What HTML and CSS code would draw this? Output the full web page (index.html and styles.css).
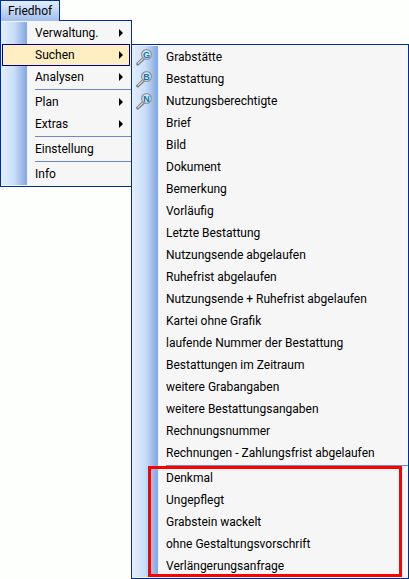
FILE: index.html
```html
<!DOCTYPE html>
<html lang="de">
<head>
    <meta charset="UTF-8">
    <meta name="viewport" content="width=device-width, initial-scale=1.0">
    <title>Friedhof</title>
    <link rel="stylesheet" href="styles.css">
</head>
<body>
    <nav class="menubar">
        <div class="main">
            <button type="button" class="tab">Friedhof</button>
            <ul class="menu main-menu">
                <li><button type="button" class="item">Verwaltung.<span class="arrow"></span></button></li>
                <li><button type="button" class="item active">Suchen<span class="arrow"></span></button></li>
                <li><button type="button" class="item">Analysen<span class="arrow"></span></button></li>
                <li class="separator"></li>
                <li><button type="button" class="item">Plan<span class="arrow"></span></button></li>
                <li><button type="button" class="item">Extras<span class="arrow"></span></button></li>
                <li class="separator"></li>
                <li><button type="button" class="item">Einstellung</button></li>
                <li class="separator"></li>
                <li><button type="button" class="item">Info</button></li>
            </ul>
        </div>

        <div class="menu submenu">
            <ul>
                <li><button type="button" class="item">
                    <svg class="icon" width="18" height="18" viewBox="0 0 18 18">
                        <path d="M1.8 15.8 L7.5 10.5" stroke="#77777b" stroke-width="3.2" stroke-linecap="round"/>
                        <path d="M2 15.4 L8 9.8" stroke="#d8d4cf" stroke-width="1.3" stroke-linecap="round"/>
                        <circle cx="10.5" cy="6.5" r="4.9" fill="#c9eaf8" stroke="#8f9299" stroke-width="1.2"/>
                        <text class="letter" x="10.5" y="9.5">G</text>
                    </svg>Grabstätte</button></li>
                <li><button type="button" class="item">
                    <svg class="icon" width="18" height="18" viewBox="0 0 18 18">
                        <path d="M1.8 15.8 L7.5 10.5" stroke="#77777b" stroke-width="3.2" stroke-linecap="round"/>
                        <path d="M2 15.4 L8 9.8" stroke="#d8d4cf" stroke-width="1.3" stroke-linecap="round"/>
                        <circle cx="10.5" cy="6.5" r="4.9" fill="#c9eaf8" stroke="#8f9299" stroke-width="1.2"/>
                        <text class="letter" x="10.5" y="9.5">B</text>
                    </svg>Bestattung</button></li>
                <li><button type="button" class="item">
                    <svg class="icon" width="18" height="18" viewBox="0 0 18 18">
                        <path d="M1.8 15.8 L7.5 10.5" stroke="#77777b" stroke-width="3.2" stroke-linecap="round"/>
                        <path d="M2 15.4 L8 9.8" stroke="#d8d4cf" stroke-width="1.3" stroke-linecap="round"/>
                        <circle cx="10.5" cy="6.5" r="4.9" fill="#c9eaf8" stroke="#8f9299" stroke-width="1.2"/>
                        <text class="letter" x="10.5" y="9.5">N</text>
                    </svg>Nutzungsberechtigte</button></li>
                <li><button type="button" class="item">Brief</button></li>
                <li><button type="button" class="item">Bild</button></li>
                <li><button type="button" class="item">Dokument</button></li>
                <li><button type="button" class="item">Bemerkung</button></li>
                <li><button type="button" class="item">Vorläufig</button></li>
                <li><button type="button" class="item">Letzte Bestattung</button></li>
                <li><button type="button" class="item">Nutzungsende abgelaufen</button></li>
                <li><button type="button" class="item">Ruhefrist abgelaufen</button></li>
                <li><button type="button" class="item">Nutzungsende + Ruhefrist abgelaufen</button></li>
                <li><button type="button" class="item">Kartei ohne Grafik</button></li>
                <li><button type="button" class="item">laufende Nummer der Bestattung</button></li>
                <li><button type="button" class="item">Bestattungen im Zeitraum</button></li>
                <li><button type="button" class="item">weitere Grabangaben</button></li>
                <li><button type="button" class="item">weitere Bestattungsangaben</button></li>
                <li><button type="button" class="item">Rechnungsnummer</button></li>
                <li><button type="button" class="item">Rechnungen - Zahlungsfrist abgelaufen</button></li>
                <li class="separator"></li>
            </ul>
            <ul class="marked">
                <li><button type="button" class="item">Denkmal</button></li>
                <li><button type="button" class="item">Ungepflegt</button></li>
                <li><button type="button" class="item">Grabstein wackelt</button></li>
                <li><button type="button" class="item">ohne Gestaltungsvorschrift</button></li>
                <li><button type="button" class="item">Verlängerungsanfrage</button></li>
            </ul>
        </div>
    </nav>
</body>
</html>
```

FILE: styles.css
```css
* {
    box-sizing: border-box;
}

body {
    margin: 0;
    background-color: #fdfffc;
    font-family: "Segoe UI", Roboto, "Open Sans", sans-serif;
    font-size: 12px;
    color: #000;
}

ul {
    list-style: none;
    margin: 0;
    padding: 0;
}

button {
    font: inherit;
    color: inherit;
    text-align: left;
    cursor: pointer;
}

.menubar {
    display: flex;
    align-items: flex-start;
}

.main {
    width: 132px;
    flex: none;
}

.tab {
    display: block;
    width: 60px;
    height: 20px;
    padding: 0 0 0 7px;
    border: 1px solid #002d96;
    border-bottom: none;
    background: linear-gradient(#e3edfd, #a3c0ec);
    line-height: 18px;
}

/* blue strip on the left side holds the icons */
.menu {
    border: 1px solid #002d96;
    padding: 1px 0;
    background-color: #f6f6f6;
    background-image: linear-gradient(to right, #e3efff 0, #c9defa 50%, #82a6e0 100%);
    background-size: 26px 100%;
    background-repeat: no-repeat;
    background-origin: content-box;
}

.main-menu {
    position: relative;
}

/* opens the top border under the tab */
.main-menu::before {
    content: "";
    position: absolute;
    top: -1px;
    left: 0;
    width: 58px;
    height: 1px;
    background-color: #a3c0ec;
}

.submenu {
    flex: 1;
    margin-top: 44px;
    margin-left: -1px;
}

.item {
    display: flex;
    align-items: center;
    position: relative;
    width: 100%;
    height: 22px;
    padding: 0 0 0 34px;
    border: none;
    background: none;
    line-height: 20px;
    white-space: nowrap;
}

.item.active {
    width: auto;
    margin: 0 1px;
    padding-left: 32px;
    border: 1px solid #000080;
    background-color: #ffeec2;
}

.main-menu li {
    display: grid;
}

.arrow {
    margin-left: auto;
    margin-right: 8px;
    border: 4px solid transparent;
    border-left-color: #000;
    border-right: none;
}

.active .arrow {
    margin-right: 6px;
}

.separator {
    height: 3px;
    padding: 1px 0;
    margin-left: 34px;
    background-color: #6b8cc9;
    background-clip: content-box;
}

.icon {
    position: absolute;
    left: 4px;
    top: 2px;
    fill: none;
}

.letter {
    font-family: "Liberation Sans", sans-serif;
    font-size: 9px;
    font-weight: bold;
    text-anchor: middle;
    fill: #1f6f9f;
}

.marked {
    position: relative;
}

/* red frame round the last group */
.marked::after {
    content: "";
    position: absolute;
    top: -1px;
    right: 6px;
    bottom: 0;
    left: 16px;
    border: 3px solid #ff0000;
    pointer-events: none;
}
```
